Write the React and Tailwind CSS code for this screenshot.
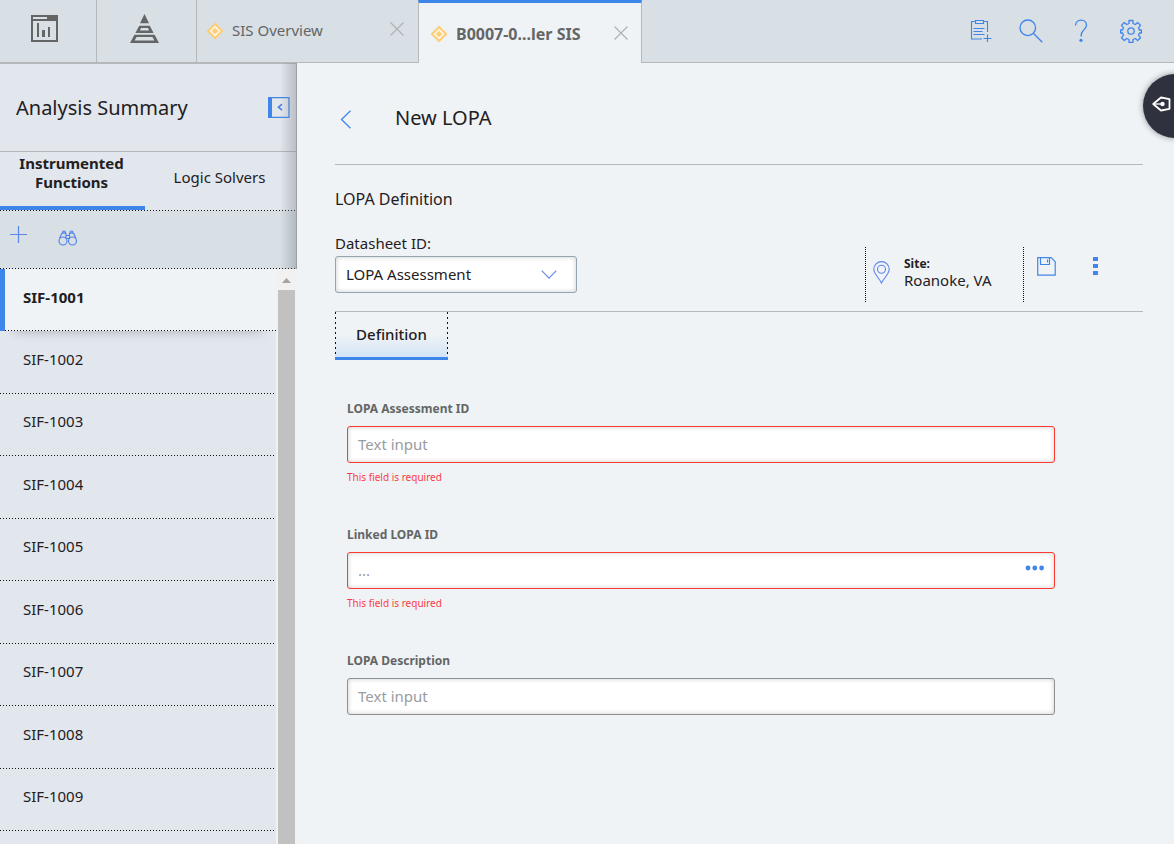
import React from "react";

const functions = [
  "SIF-1001",
  "SIF-1002",
  "SIF-1003",
  "SIF-1004",
  "SIF-1005",
  "SIF-1006",
  "SIF-1007",
  "SIF-1008",
  "SIF-1009",
];

function ReportIcon() {
  return (
    <svg width="27" height="27" viewBox="0 0 27 27" shapeRendering="crispEdges" aria-hidden="true">
      <rect x="1" y="1" width="25" height="25" fill="none" stroke="#636665" strokeWidth="2" />
      <path fill="#636665" d="M0 0h27v6H0z" />
      <path fill="#d8dfe5" d="M2 2h14v2H2z" />
      <path fill="#636665" d="M6 8h2v14H6zM11 15h3v7h-3zM17 12h2v10h-2z" />
    </svg>
  );
}

function PyramidIcon() {
  return (
    <svg width="29" height="29" viewBox="0 0 29 29" fill="#636665" aria-hidden="true">
      <path d="M14.500 0 19 9.300H10z" />
      <path fillRule="evenodd" d="M9.200 11.800h10.600l3.800 7.200H5.400zM11 14 9.900 16.600h9.200L18 14z" />
      <path fillRule="evenodd" d="M4.400 20.800h20.200L29 29H0zM6.600 23 4.600 26.600h19.800L22.400 23z" />
    </svg>
  );
}

function DiamondIcon() {
  return (
    <svg width="18" height="18" viewBox="0 0 18 18" aria-hidden="true">
      <path fill="#ffcd78" d="M9 .500 17.500 9 9 17.500.500 9z" />
      <path fill="none" stroke="#fff6e2" strokeWidth="1.700" d="M9 4.600 13.400 9 9 13.400 4.600 9z" />
    </svg>
  );
}

function CloseIcon() {
  return (
    <svg width="14" height="14" viewBox="0 0 14 14" fill="none" stroke="#aeb2b6" strokeWidth="1.200" aria-hidden="true">
      <path d="M.5.5l13 13M13.500.500l-13 13" />
    </svg>
  );
}

function ClipboardIcon() {
  return (
    <svg width="22" height="24" viewBox="0 0 22 24" fill="none" stroke="#4086ea" strokeWidth="1.100" aria-hidden="true">
      <path d="M5 2.500H1.500v17.500H12M14 2.500h3.500V13" />
      <path d="M5.500 1.500h8v3h-8z" />
      <path d="M3.500 9.500h11M3.500 12.500h9M3.500 15.500h11" strokeWidth="1" />
      <path d="M17.500 15.500V23M13.500 19.500h8" />
    </svg>
  );
}

function SearchIcon() {
  return (
    <svg width="24" height="24" viewBox="0 0 24 24" fill="none" stroke="#4086ea" strokeWidth="1.300" aria-hidden="true">
      <circle cx="8.800" cy="8.800" r="7.800" />
      <path d="M14.300 14.300 23.300 23.300" />
    </svg>
  );
}

function HelpIcon() {
  return (
    <svg width="14" height="24" viewBox="0 0 14 24" fill="none" stroke="#4086ea" strokeWidth="1.300" aria-hidden="true">
      <path d="M1.500 6.500C1.500 3.200 3.800 1.200 7 1.200s5.500 2 5.500 5c0 2.600-1.600 3.800-3.200 5.200C7.800 12.800 7 14 7 17.500" />
      <circle cx="7" cy="21.300" r="1.600" fill="#4086ea" stroke="none" />
    </svg>
  );
}

function GearIcon() {
  return (
    <svg width="22" height="24" viewBox="0 0 22 24" fill="none" stroke="#4086ea" strokeWidth="1.300" strokeLinejoin="round" aria-hidden="true">
      <path d="M9 1.500h4v3l2.300 1 2.400-2 2.800 2.900-2 2.400.900 2.200h2v3h-2l-.900 2.200 2 2.500-2.800 2.800-2.400-2-2.300 1v3H9v-3l-2.300-1-2.400 2-2.800-2.800 2-2.500-.900-2.200h-2v-3h2l.900-2.200-2-2.400 2.800-2.900 2.400 2 2.300-1z" />
      <circle cx="11" cy="12" r="3.200" />
    </svg>
  );
}

function CollapseIcon() {
  return (
    <svg width="22" height="21" viewBox="0 0 22 21" aria-hidden="true">
      <path fill="none" stroke="#4086ea" strokeWidth="1.300" d="M1 .700h20v19.600H1z" />
      <path fill="#4086ea" d="M0 0h4v21H0z" />
      <path fill="none" stroke="#4f82e8" strokeWidth="1.700" d="M14 7.200 10.500 10.200 14 13.200" />
    </svg>
  );
}

function PlusIcon() {
  return (
    <svg width="18" height="18" viewBox="0 0 18 18" fill="none" stroke="#5b86ea" strokeWidth="1.200" aria-hidden="true">
      <path d="M8.500 0v17M0 8.500h17" />
    </svg>
  );
}

function BinocularsIcon() {
  return (
    <svg width="20" height="16" viewBox="0 0 20 16" fill="none" stroke="#4f82ea" strokeWidth="1.100" aria-hidden="true">
      <circle cx="5" cy="11" r="4" />
      <circle cx="14.500" cy="11" r="4" />
      <path d="M1.500 8.500 3.800 3.500Q6 2.200 8 3.500V9M18 8.500 15.700 3.500Q13.500 2.200 11.500 3.500V9M4.500 3V2Q6 0 7.500 2v1M15 3V2Q13.500 0 12 2v1M8 5.500h3.500M8 8.500h3.500" />
    </svg>
  );
}

function PinIcon() {
  return (
    <svg width="17" height="23" viewBox="0 0 17 23" fill="none" stroke="#5f84ea" strokeWidth="1.100" aria-hidden="true">
      <path d="M8.500 22C6.500 17.500.800 13 .800 8.300a7.700 7.700 0 0 1 15.400 0C16.200 13 10.500 17.500 8.500 22z" />
      <circle cx="8.500" cy="8.300" r="4" />
    </svg>
  );
}

function SaveIcon() {
  return (
    <svg width="19" height="19" viewBox="0 0 19 19" fill="none" stroke="#4086ea" strokeWidth="1.200" aria-hidden="true">
      <path d="M.700.700h13.500l4 4v13.500H.700z" />
      <path d="M3.500.700v6.800h9V.700M10.500 2.500v3" />
    </svg>
  );
}

function KebabIcon() {
  return (
    <svg width="5" height="18" viewBox="0 0 5 18" fill="#4086ea" aria-hidden="true">
      <path d="M0 0h5v4H0zM0 7h5v4H0zM0 14h5v4H0z" />
    </svg>
  );
}

function PenIcon() {
  return (
    <svg width="19" height="16" viewBox="0 0 19 16" aria-hidden="true">
      <path fill="none" stroke="#fff" strokeWidth="1.800" strokeLinejoin="round" d="M1.200 8 9 1.500 17.500 3.200v9.600L9 14.500z" />
      <path stroke="#fff" strokeWidth="1.300" d="M1.500 8H10" />
      <circle cx="10.500" cy="8" r="2.200" fill="#fff" />
    </svg>
  );
}

function TopButton({ label, children }) {
  return (
    <button type="button" aria-label={label} className="flex w-[50px] items-center justify-center">
      {children}
    </button>
  );
}

function Header() {
  return (
    <header className="flex h-[63px] shrink-0 bg-[#d8dfe5]">
      <button type="button" aria-label="Dashboard" className="flex w-[97px] items-center justify-center border-r border-b border-[#b5b7ba] pb-[6px] pr-2">
        <ReportIcon />
      </button>
      <button type="button" aria-label="Hierarchy" className="flex w-[100px] items-center justify-center border-r border-b border-[#b5b7ba] pb-[6px] pr-1">
        <PyramidIcon />
      </button>
      <div className="flex w-[221px] items-center border-b border-[#b5b7ba] pl-[9px] pr-[14px]">
        <a href="#overview" className="flex flex-1 items-center gap-2 text-[15px] text-[#636665]">
          <DiamondIcon />
          <span className="pb-[2px]">SIS Overview</span>
        </a>
        <button type="button" aria-label="Close SIS Overview" className="pb-1">
          <CloseIcon />
        </button>
      </div>
      <div className="flex w-[224px] items-center border-x border-t-3 border-x-[#b5b7ba] border-t-[#3d85e8] bg-[#eff3f6] pt-[2px] pl-[11px] pr-[13px]">
        <a href="#sis" aria-current="page" className="flex flex-1 items-center gap-2 text-[16px] font-bold text-[#636665]">
          <DiamondIcon />
          B0007-0...ler SIS
        </a>
        <button type="button" aria-label="Close B0007" className="pb-[2px]">
          <CloseIcon />
        </button>
      </div>
      <nav className="flex flex-1 justify-end border-b border-[#b5b7ba] pr-[18px]">
        <TopButton label="Add to list"><ClipboardIcon /></TopButton>
        <TopButton label="Search"><SearchIcon /></TopButton>
        <TopButton label="Help"><HelpIcon /></TopButton>
        <TopButton label="Settings"><GearIcon /></TopButton>
      </nav>
    </header>
  );
}

function DottedLine() {
  return <div className="h-px w-full shrink-0 bg-[repeating-linear-gradient(90deg,#111_0_1px,transparent_1px_3px)]" />;
}

function Sidebar() {
  return (
    <aside className="flex w-[297px] shrink-0 flex-col bg-[#e2e6ed]">
      <div className="relative shrink-0 border-r border-[#9b9fa3]">
        <div className="flex h-[89px] items-center justify-between border-b border-t border-[#b5b7ba] pl-4 pr-[6px]">
          <h2 className="text-[20px] text-[#1f2022]">Analysis Summary</h2>
          <button type="button" aria-label="Collapse panel">
            <CollapseIcon />
          </button>
        </div>
        <div className="flex h-[58px] text-[15px] leading-[19px] text-[#1f2022]">
          <button type="button" className="w-[145px] border-b-4 border-[#3d85e8] pr-[18px] pl-4 pb-3 font-bold">
            Instrumented Functions
          </button>
          <button type="button" className="flex-1 pb-[7px] pr-[2px]">
            Logic Solvers
          </button>
        </div>
        <DottedLine />
        <div className="flex h-[57px] items-center gap-[30px] bg-[#d8dfe5] pl-[10px]">
          <button type="button" aria-label="Add function" className="pb-[10px]">
            <PlusIcon />
          </button>
          <button type="button" aria-label="Find function" className="pb-1">
            <BinocularsIcon />
          </button>
        </div>
        <DottedLine />
        <div className="pointer-events-none absolute inset-y-0 right-0 w-4 bg-linear-to-r from-transparent to-[#7c868966]" />
      </div>
      <div className="flex min-h-0 flex-1">
        <ul className="min-w-0 flex-1 overflow-hidden text-[15px] text-[#1f2022]">
          {functions.map((name, i) => (
            <li
              key={name}
              className={
                i === 0
                  ? "relative flex flex-col border-l-5 border-[#3d85e8] bg-[#eff3f6] font-bold shadow-[0_14px_12px_-14px_rgba(0,0,0,0.25)] odd:h-[62px] even:h-[63px]"
                  : "flex flex-col odd:h-[62px] even:h-[63px]"
              }
            >
              <a href={"#" + name} className={i === 0 ? "flex flex-1 items-center pb-[5px] pl-[18px]" : "flex flex-1 items-center pb-[6px] pl-[23px]"}>
                {name}
              </a>
              <DottedLine />
            </li>
          ))}
        </ul>
        <div className="flex w-[21px] flex-col items-center bg-[#f1f1f1]">
          <svg width="9" height="21" viewBox="0 0 9 21" aria-hidden="true">
            <path fill="#a3a3a3" d="M0 14 4.500 9 9 14z" />
          </svg>
          <div className="w-[17px] flex-1 bg-[#c1c1c1]" />
        </div>
      </div>
    </aside>
  );
}

function Field({ id, label, placeholder, required, lookup }) {
  const frame = required ? "border-[#fb3b32]" : "border-[#8e9193]";
  return (
    <div className={required ? "h-[126px]" : ""}>
      <label htmlFor={id} className="block text-[12px] leading-[18px] font-bold text-[#636665]">
        {label}
      </label>
      <div className={"mt-2 flex h-[37px] items-center rounded-[3px] border bg-white shadow-[inset_0_0_5px_rgba(0,0,0,0.2)] " + frame}>
        <input
          id={id}
          type="text"
          placeholder={placeholder}
          className="h-full min-w-0 flex-1 bg-transparent px-[10px] pb-[2px] text-[15px] outline-none placeholder:text-[#999c9e]"
        />
        {lookup && (
          <button type="button" aria-label="Look up" className="px-[9px] pb-[6px]">
            <svg width="20" height="6" viewBox="0 0 20 6" fill="#4086ea" aria-hidden="true">
              <circle cx="3" cy="3" r="2.400" />
              <circle cx="9.800" cy="3" r="2.400" />
              <circle cx="16.600" cy="3" r="2.400" />
            </svg>
          </button>
        )}
      </div>
      {required && <p className="mt-[5px] text-[10px] leading-[18px] text-[#fb3b46]">This field is required</p>}
    </div>
  );
}

function Main() {
  return (
    <main className="min-w-0 flex-1 pl-[38px] pr-[31px] text-[15px] text-[#1f2022]">
      <div className="flex h-[102px] items-center border-b border-[#b5b9bc] pl-[5px] pt-2">
        <button type="button" aria-label="Back" className="mr-[43px] pt-1">
          <svg width="12" height="19" viewBox="0 0 12 19" fill="none" stroke="#4086ea" strokeWidth="1.300" aria-hidden="true">
            <path d="M10.500.700 1.500 9.500l9 8.800" />
          </svg>
        </button>
        <h1 className="text-[20px]">New LOPA</h1>
      </div>
      <div className="flex h-[147px] items-end justify-between border-b border-[#b5b9bc]">
        <div className="pb-[18px]">
          <h2 className="text-[16px] leading-[22px]">LOPA Definition</h2>
          <label htmlFor="datasheet" className="mt-[23px] mb-[3px] block text-[15px] leading-5">
            Datasheet ID:
          </label>
          <div className="relative w-[242px]">
            <select
              id="datasheet"
              className="block h-[37px] w-full appearance-none rounded-[3px] border border-[#93a5b0] bg-white pl-[10px] pr-10 text-[15px] shadow-[inset_0_0_5px_rgba(0,0,0,0.2)] outline-none"
            >
              <option>LOPA Assessment</option>
            </select>
            <svg className="pointer-events-none absolute top-[14px] right-5" width="16" height="10" viewBox="0 0 16 10" fill="none" stroke="#6e8ae8" strokeWidth="1.200" aria-hidden="true">
              <path d="M.700.700 8 8.200 15.300.700" />
            </svg>
          </div>
        </div>
        <div className="flex h-16 items-start">
          <div className="flex h-[55px] w-[159px] items-center gap-[14px] border-x border-dotted border-[#111] pl-[7px] pb-1">
            <PinIcon />
            <p className="pb-[2px] leading-[17px]">
              <strong className="block text-[12px]">Site:</strong>
              <span className="block text-[15px]">Roanoke, VA</span>
            </p>
          </div>
          <button type="button" aria-label="Save" className="ml-[13px] mt-[10px]">
            <SaveIcon />
          </button>
          <button type="button" aria-label="More actions" className="mr-9 ml-[37px] mt-[10px] pr-[9px]">
            <KebabIcon />
          </button>
        </div>
      </div>
      <button type="button" className="flex h-12 w-[113px] border-b-3 border-[#3d85e8] bg-linear-to-b from-transparent from-50% to-[#d3e4f5]">
        <span className="h-full w-px bg-[repeating-linear-gradient(180deg,#111_0_2px,transparent_2px_5px)]" />
        <span className="flex h-full flex-1 items-center justify-center font-medium">Definition</span>
        <span className="h-full w-px bg-[repeating-linear-gradient(180deg,#111_0_2px,transparent_2px_5px)]" />
      </button>
      <form className="mt-10 ml-3 mr-[88px]">
        <Field id="assessment" label="LOPA Assessment ID" placeholder="Text input" required />
        <Field id="linked" label="Linked LOPA ID" placeholder="..." required lookup />
        <Field id="description" label="LOPA Description" placeholder="Text input" />
      </form>
    </main>
  );
}

export default function App() {
  return (
    <div className="relative flex h-screen flex-col overflow-hidden bg-[#eff3f6] font-['Noto_Sans',sans-serif]">
      <Header />
      <div className="flex min-h-0 flex-1">
        <Sidebar />
        <Main />
      </div>
      <button
        type="button"
        aria-label="Open guide editor"
        className="absolute top-[74px] -right-[33px] flex size-[64px] items-center rounded-full bg-[#2f313f] pb-1 pl-[9px] shadow-[0_0_6px_rgba(0,0,0,0.4)]"
      >
        <PenIcon />
      </button>
    </div>
  );
}
